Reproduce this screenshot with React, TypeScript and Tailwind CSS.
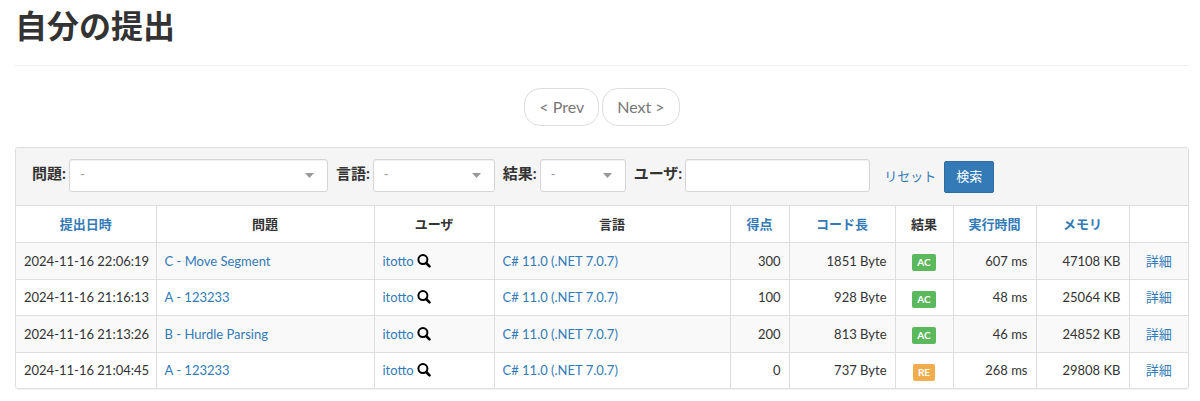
import type { ReactNode } from "react";

type Submission = {
  time: string;
  task: string;
  user: string;
  language: string;
  score: number;
  size: string;
  status: "AC" | "RE";
  execTime: string;
  memory: string;
};

const submissions: Submission[] = [
  {
    time: "2024-11-16 22:06:19",
    task: "C - Move Segment",
    user: "itotto",
    language: "C# 11.0 (.NET 7.0.7)",
    score: 300,
    size: "1851 Byte",
    status: "AC",
    execTime: "607 ms",
    memory: "47108 KB",
  },
  {
    time: "2024-11-16 21:16:13",
    task: "A - 123233",
    user: "itotto",
    language: "C# 11.0 (.NET 7.0.7)",
    score: 100,
    size: "928 Byte",
    status: "AC",
    execTime: "48 ms",
    memory: "25064 KB",
  },
  {
    time: "2024-11-16 21:13:26",
    task: "B - Hurdle Parsing",
    user: "itotto",
    language: "C# 11.0 (.NET 7.0.7)",
    score: 200,
    size: "813 Byte",
    status: "AC",
    execTime: "46 ms",
    memory: "24852 KB",
  },
  {
    time: "2024-11-16 21:04:45",
    task: "A - 123233",
    user: "itotto",
    language: "C# 11.0 (.NET 7.0.7)",
    score: 0,
    size: "737 Byte",
    status: "RE",
    execTime: "268 ms",
    memory: "29808 KB",
  },
];

const columns = [
  { label: "提出日時", width: "w-[140px]", sortable: true },
  { label: "問題", width: "w-[218px]", sortable: false },
  { label: "ユーザ", width: "w-[120px]", sortable: false },
  { label: "言語", width: "w-auto", sortable: false },
  { label: "得点", width: "w-[59px]", sortable: true },
  { label: "コード長", width: "w-[106px]", sortable: true },
  { label: "結果", width: "w-[58px]", sortable: false },
  { label: "実行時間", width: "w-[83px]", sortable: true },
  { label: "メモリ", width: "w-[93px]", sortable: true },
  { label: "", width: "w-[59px]", sortable: false },
];

const statusColors = {
  AC: "bg-[#5cb85c]",
  RE: "bg-[#f0ad4e]",
};

function SearchIcon() {
  return (
    <svg viewBox="0 0 14 14" className="h-[14px] w-[14px]" fill="none" stroke="#000">
      <circle cx="5.9" cy="5.6" r="4.5" strokeWidth="2" />
      <path d="M9.2 9 12.5 12.3" strokeWidth="2.6" strokeLinecap="round" />
    </svg>
  );
}

function FilterSelect({ id, label, width }: { id: string; label: string; width: string }) {
  return (
    <div className="flex items-center gap-[3px]">
      <label htmlFor={id} className="pb-1 text-[15px] font-bold">
        {label}:
      </label>
      <div className={`relative ${width}`}>
        <select
          id={id}
          className="block h-[33px] w-full appearance-none rounded-[3px] border border-[#d4d4d4] bg-white px-[10px] text-[13px] text-[#999] shadow-[inset_0_1px_1px_rgba(0,0,0,0.06)]"
        >
          <option>-</option>
        </select>
        <svg
          viewBox="0 0 9 5"
          className="pointer-events-none absolute top-[14px] right-[14px] h-[5px] w-[9px]"
          fill="#999"
        >
          <path d="M0 0h9L4.5 5z" />
        </svg>
      </div>
    </div>
  );
}

function TextLink({ children }: { children: ReactNode }) {
  return (
    <a href="#" className="text-[#337ab7]">
      {children}
    </a>
  );
}

function Filters() {
  return (
    <form className="flex flex-wrap items-center gap-2 border-b border-[#ddd] bg-[#f5f5f5] px-4 pt-[9px] pb-3">
      <FilterSelect id="task" label="問題" width="w-[259px]" />
      <FilterSelect id="language" label="言語" width="w-[122px]" />
      <FilterSelect id="status" label="結果" width="w-[86px]" />
      <div className="flex items-center gap-[3px]">
        <label htmlFor="user" className="pb-1 text-[15px] font-bold">
          ユーザ:
        </label>
        <input
          id="user"
          type="text"
          className="h-[33px] w-[185px] rounded-[3px] border border-[#d4d4d4] bg-white px-[10px] text-[13px] shadow-[inset_0_1px_1px_rgba(0,0,0,0.06)]"
        />
      </div>
      <div className="flex items-center gap-2 pt-1 pl-[6px] text-[13px]">
        <TextLink>リセット</TextLink>
        <button
          type="submit"
          className="h-8 rounded-[2px] border border-[#2e6da4] bg-[#337ab7] px-[11px] text-white"
        >
          検索
        </button>
      </div>
    </form>
  );
}

function SubmissionTable() {
  return (
    <table className="w-full table-fixed text-[13px] leading-[18px]">
      <thead>
        <tr className="h-9">
          {columns.map((col) => (
            <th
              key={col.label}
              className={`${col.width} border-l border-[#ddd] text-center font-bold first:border-l-0`}
            >
              {col.sortable ? <TextLink>{col.label}</TextLink> : col.label}
            </th>
          ))}
        </tr>
      </thead>
      <tbody className="[&_td]:border-t [&_td]:border-l [&_td]:border-[#ddd] [&_td]:px-2 [&_td]:whitespace-nowrap [&_td:first-child]:border-l-0">
        {submissions.map((s) => (
          <tr key={s.time} className="h-9 odd:h-[37px] odd:bg-[#f9f9f9]">
            <td>{s.time}</td>
            <td>
              <TextLink>{s.task}</TextLink>
            </td>
            <td>
              <span className="flex items-center gap-[3px]">
                <TextLink>{s.user}</TextLink>
                <a href="#" aria-label={s.user}>
                  <SearchIcon />
                </a>
              </span>
            </td>
            <td>
              <TextLink>{s.language}</TextLink>
            </td>
            <td className="text-right">{s.score}</td>
            <td className="text-right">{s.size}</td>
            <td className="text-center">
              <span
                className={`${statusColors[s.status]} mt-1 inline-block rounded-[2px] px-[5px] text-[10px] leading-[17px] font-bold text-white`}
              >
                {s.status}
              </span>
            </td>
            <td className="text-right">{s.execTime}</td>
            <td className="text-right">{s.memory}</td>
            <td className="text-center">
              <TextLink>詳細</TextLink>
            </td>
          </tr>
        ))}
      </tbody>
    </table>
  );
}

export default function App() {
  return (
    <main className="bg-white pt-1 pr-[11px] pb-3 pl-[15px] font-[Lato,'Noto_Sans_CJK_JP',sans-serif] text-[#333]">
      <h1 className="text-[32px] leading-[44px] font-bold">自分の提出</h1>
      <hr className="mt-[17px] border-[#eee]" />
      <nav className="mt-[22px] flex justify-center gap-[3px] text-base text-[#777]">
        <a href="#" className="rounded-[16px] border border-[#ddd] px-[14px] py-[6px]">
          &lt; Prev
        </a>
        <a href="#" className="rounded-[16px] border border-[#ddd] px-[14px] py-[6px]">
          Next &gt;
        </a>
      </nav>
      <section className="mt-[21px] overflow-hidden rounded-[3px] border border-[#ddd] shadow-[0_1px_1px_rgba(0,0,0,0.05)]">
        <Filters />
        <SubmissionTable />
      </section>
    </main>
  );
}
